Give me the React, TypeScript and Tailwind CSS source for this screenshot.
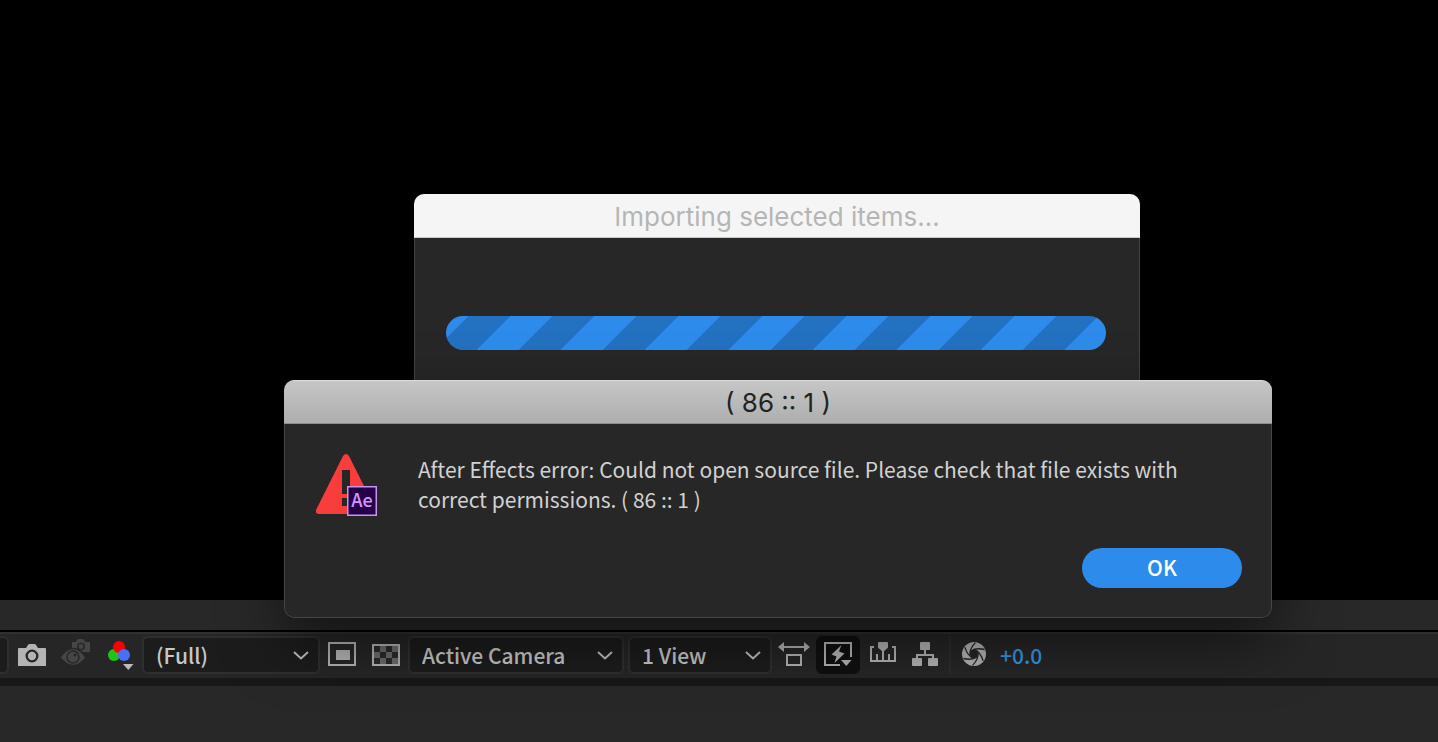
import { ReactNode, useState } from "react";
import clsx from "clsx";

interface ToolSelectProps {
  label: string;
  options: string[];
  className: string;
}

const ToolSelect = ({ label, options, className }: ToolSelectProps): JSX.Element => (
  <div className={clsx("grid h-[38px] shrink-0 items-center", className)}>
    <select
      aria-label={label}
      className="col-start-1 row-start-1 h-full w-full appearance-none rounded-md border-2 border-[#2f2f2f] bg-[#1c1c1c] pl-3 text-[21px] leading-[30px] font-medium text-[#c8c8c8] outline-none"
    >
      {options.map((option) => (
        <option key={option}>{option}</option>
      ))}
    </select>
    <svg
      viewBox="0 0 16 10"
      className="pointer-events-none col-start-1 row-start-1 mr-[11px] h-[10px] w-4 justify-self-end"
      fill="none"
      stroke="#c0c0c0"
      strokeWidth="2"
      aria-hidden="true"
    >
      <path d="M1 2 8 8.500l7-6.500" />
    </svg>
  </div>
);

interface ToolButtonProps {
  label: string;
  className?: string;
  children: ReactNode;
}

const ToolButton = ({ label, className, children }: ToolButtonProps): JSX.Element => (
  <button type="button" aria-label={label} className={clsx("flex h-[38px] shrink-0 items-center justify-center", className)}>
    {children}
  </button>
);

const CameraIcon = () => (
  <svg width="28" height="22" viewBox="0 0 28 22" fill="#b4b4b4">
    <path
      fillRule="evenodd"
      d="M1 4h7l2-3q.5-1 1.500-1h5q1 0 1.500 1l2 3h7q1 0 1 1v17H0V5q0-1 1-1ZM14 5.500a6.500 6.500 0 1 0 0 13 6.500 6.500 0 0 0 0-13Zm0 2.300a4.200 4.200 0 1 1 0 8.400 4.200 4.200 0 0 1 0-8.400Z"
    />
  </svg>
);

const EyeIcon = () => (
  <svg width="30" height="28" viewBox="0 0 30 28">
    <path d="M12 3h4l1-2q.5-1 1.500-1h4q1 0 1.500 1l1 2h4q1 0 1 1v9H12Z" fill="#464646" />
    <circle cx="21" cy="7.500" r="3.200" fill="#464646" stroke="#272727" strokeWidth="1.500" />
    <path d="M0 18.500Q6 9.500 13 9.500t13 9Q20 26.500 13 26.500T0 18.500Z" fill="#464646" stroke="#272727" strokeWidth="1.500" />
    <circle cx="13" cy="18" r="6" fill="#464646" stroke="#272727" strokeWidth="1.500" />
    <circle cx="15" cy="16" r="1.500" fill="#272727" />
  </svg>
);

const ChannelsIcon = () => (
  <svg width="26" height="30" viewBox="0 0 26 30">
    <circle cx="6" cy="15" r="6" fill="#1fc41a" />
    <circle cx="11" cy="7" r="6" fill="#fe0000" />
    <circle cx="16" cy="15" r="6" fill="#4670fc" />
    <path d="M15 24h10.500l-5.200 6Z" fill="#bcbcbc" />
  </svg>
);

const RegionIcon = () => (
  <svg width="28" height="24" viewBox="0 0 28 24">
    <rect x="1" y="1" width="26" height="22" fill="none" stroke="#b4b4b4" strokeWidth="2" />
    <rect x="8" y="8" width="14" height="10" fill="#b4b4b4" />
  </svg>
);

const GridIcon = () => (
  <svg width="28" height="22" viewBox="0 0 28 22">
    <rect x="1" y="1" width="26" height="20" fill="#2b2b2b" />
    <path fill="#6c6c6c" d="M8 2h6v6H8ZM20 2h6v6h-6ZM2 8h6v6H2ZM14 8h6v6h-6ZM8 14h6v6H8ZM20 14h6v6h-6Z" />
    <rect x="1" y="1" width="26" height="20" fill="none" stroke="#b4b4b4" strokeWidth="2" />
  </svg>
);

const AspectIcon = () => (
  <svg width="32" height="24" viewBox="0 0 32 24" fill="#b4b4b4">
    <path d="M0 5 6 0v4h20V0l6 5-6 5V6H6v4Z" />
    <rect x="9" y="13" width="14" height="10" fill="none" stroke="#b4b4b4" strokeWidth="2" />
  </svg>
);

const FastPreviewIcon = () => (
  <svg width="28" height="26" viewBox="0 0 28 26" fill="#b4b4b4">
    <path d="M27 15V1H1v22h15" fill="none" stroke="#b4b4b4" strokeWidth="2" />
    <path d="m17.500 3-10 9.500 5 2L10.500 21l10-9.500-5.500-2Z" />
    <path d="M17 18h10.500l-5.200 6Z" />
  </svg>
);

const TimelineIcon = () => (
  <svg width="26" height="20" viewBox="0 0 26 20" fill="#b4b4b4">
    <path d="M4 5H1v14h24V5h-3" fill="none" stroke="#b4b4b4" strokeWidth="2" />
    <path d="M6 12h2v6H6ZM18 12h2v6h-2ZM12 6h2v12h-2Z" />
    <path d="M9 0h8q1 0 1 1v4q0 1-1 1.500L14 9h-2L9 6.500Q8 6 8 5V1q0-1 1-1Z" />
  </svg>
);

const FlowchartIcon = () => (
  <svg width="26" height="24" viewBox="0 0 26 24" fill="#b4b4b4">
    <rect x="8" width="10" height="8" rx="1" />
    <rect y="16" width="10" height="8" rx="1" />
    <rect x="16" y="16" width="10" height="8" rx="1" />
    <path d="M12 8h2v4h8v4h-2v-2H6v2H4v-4h8Z" />
  </svg>
);

const ApertureIcon = () => (
  <svg width="24" height="24" viewBox="0 0 24 24">
    <circle cx="12" cy="12" r="12" fill="#b4b4b4" />
    <circle cx="12" cy="12" r="4" fill="#242424" />
    {[0, 60, 120, 180, 240, 300].map((angle) => (
      <path
        key={angle}
        d="M9 9Q14 5.500 22.500 7.500"
        fill="none"
        stroke="#242424"
        strokeWidth="1.300"
        transform={`rotate(${angle} 12 12)`}
      />
    ))}
  </svg>
);

const WarningIcon = () => (
  <svg width="62" height="62" viewBox="0 0 62 62" className="shrink-0" role="img" aria-label="Ae">
    <path d="M27 2q3-4 6 0l27 54q1 4-3 4H3q-4 0-3-4Z" fill="#f93d3d" />
    <path d="M26 16h8v24h-8ZM26 44h8v8h-8Z" fill="#272727" />
    <rect x="31" y="32" width="30" height="30" fill="#c695ef" />
    <rect x="32.500" y="33.500" width="27" height="27" fill="#250047" />
    <text x="46" y="53" textAnchor="middle" fontSize="18" fontWeight="500" fill="#d794ff">
      Ae
    </text>
  </svg>
);

const ImportWindow = (): JSX.Element => (
  <section className="absolute top-[194px] left-[414px] h-[300px] w-[726px] overflow-hidden rounded-[10px] bg-[#272727]">
    <h2 className="h-11 border-b border-[#c8cccb] bg-[#f5f5f5] text-center font-[Inter,sans-serif] text-[26px] leading-[46px] text-[#b5b5b5]">
      Importing selected items...
    </h2>
    <div className="h-[256px] border-x border-[#444] px-[31px] pt-[78px]">
      <div
        role="progressbar"
        aria-label="Importing selected items"
        className="mr-[2px] h-[34px] rounded-full bg-[linear-gradient(135deg,#2371c1_25%,#2d8ceb_25%,#2d8ceb_50%,#2371c1_50%,#2371c1_75%,#2d8ceb_75%)] bg-[length:84px_84px] bg-[position:23px_0px]"
      />
    </div>
  </section>
);

const ErrorDialog = ({ onClose }: { onClose: () => void }): JSX.Element => (
  <section
    role="alertdialog"
    aria-labelledby="error-title"
    aria-describedby="error-message"
    className="absolute top-[380px] left-[284px] w-[988px] overflow-hidden rounded-[10px] bg-[#272727] shadow-[0_24px_60px_rgba(0,0,0,0.5)]"
  >
    <h2
      id="error-title"
      className="h-11 border-t border-b border-t-[#dcdcdc] border-b-[#8c8e8e] bg-linear-to-b from-[#c6c6c6] to-[#aeaeae] text-center font-[Inter,sans-serif] text-[26px] leading-[44px] text-[#222]"
    >
      ( 86 :: 1 )
    </h2>
    <div className="rounded-b-[10px] border border-t-0 border-[#454545] px-[29px] pt-[30px] pb-[29px]">
      <div className="flex gap-10 pl-[2px]">
        <WarningIcon />
        <p id="error-message" className="text-[21px] leading-[30px] text-[#d2d2d2]">
          After Effects error: Could not open source file. Please check that file exists with
          <br />
          correct permissions. ( 86 :: 1 )
        </p>
      </div>
      <div className="mt-8 flex justify-end">
        <button
          type="button"
          onClick={onClose}
          className="h-10 w-40 rounded-full bg-[#2d8ceb] pb-[2px] text-[21px] leading-[30px] font-medium text-white"
        >
          OK
        </button>
      </div>
    </div>
  </section>
);

const Toolbar = (): JSX.Element => (
  <div className="flex h-[46px] items-center border-t-2 border-[#303030] bg-[#262626] pb-[2px]">
    <div className="h-[38px] w-[9px] shrink-0 rounded-r-md border-2 border-l-0 border-[#2f2f2f] bg-[#1c1c1c]" />
    <ToolButton label="Take Snapshot" className="ml-[9px]">
      <CameraIcon />
    </ToolButton>
    <ToolButton label="Show Snapshot" className="ml-[14px] pb-1">
      <EyeIcon />
    </ToolButton>
    <ToolButton label="Show Channel" className="ml-[18px]">
      <ChannelsIcon />
    </ToolButton>
    <ToolSelect label="Resolution" options={["(Full)", "Half", "Quarter"]} className="ml-2 w-[178px]" />
    <ToolButton label="Region of Interest" className="ml-2 pb-[2px]">
      <RegionIcon />
    </ToolButton>
    <ToolButton label="Transparency Grid" className="ml-4">
      <GridIcon />
    </ToolButton>
    <ToolSelect label="3D View" options={["Active Camera", "Front", "Top"]} className="ml-2 w-[216px]" />
    <ToolSelect label="View Layout" options={["1 View", "2 Views", "4 Views"]} className="ml-1 w-36" />
    <ToolButton label="Pixel Aspect Ratio Correction" className="ml-[6px] pb-[2px]">
      <AspectIcon />
    </ToolButton>
    <ToolButton label="Fast Previews" className="ml-[6px] w-11 rounded-md bg-[#101010]">
      <FastPreviewIcon />
    </ToolButton>
    <ToolButton label="Timeline" className="ml-[10px] pb-[6px]">
      <TimelineIcon />
    </ToolButton>
    <ToolButton label="Flowchart" className="ml-4 pb-[2px]">
      <FlowchartIcon />
    </ToolButton>
    <div className="ml-[11px] h-[38px] w-[2px] shrink-0 bg-[#2e2e2e]" />
    <ToolButton label="Reset Exposure" className="ml-[11px] pb-[2px]">
      <ApertureIcon />
    </ToolButton>
    <button type="button" className="ml-[14px] h-[38px] text-[21px] leading-[30px] font-medium text-[#3599e2]">
      +0.0
    </button>
  </div>
);

const App = (): JSX.Element => {
  const [isErrorOpen, setIsErrorOpen] = useState<boolean>(true);

  return (
    <div className="relative flex min-h-screen flex-col overflow-hidden bg-black font-['Noto_Sans_CJK_SC',sans-serif]">
      <main className="flex-1" />
      <footer>
        <div className="h-[30px] bg-[#282828]" />
        <div className="h-[2px] bg-black" />
        <Toolbar />
        <div className="h-2 bg-[#181818]" />
        <div className="h-14 bg-[#282828]" />
      </footer>

      <ImportWindow />
      {isErrorOpen && <ErrorDialog onClose={() => setIsErrorOpen(false)} />}
    </div>
  );
};

export default App;
